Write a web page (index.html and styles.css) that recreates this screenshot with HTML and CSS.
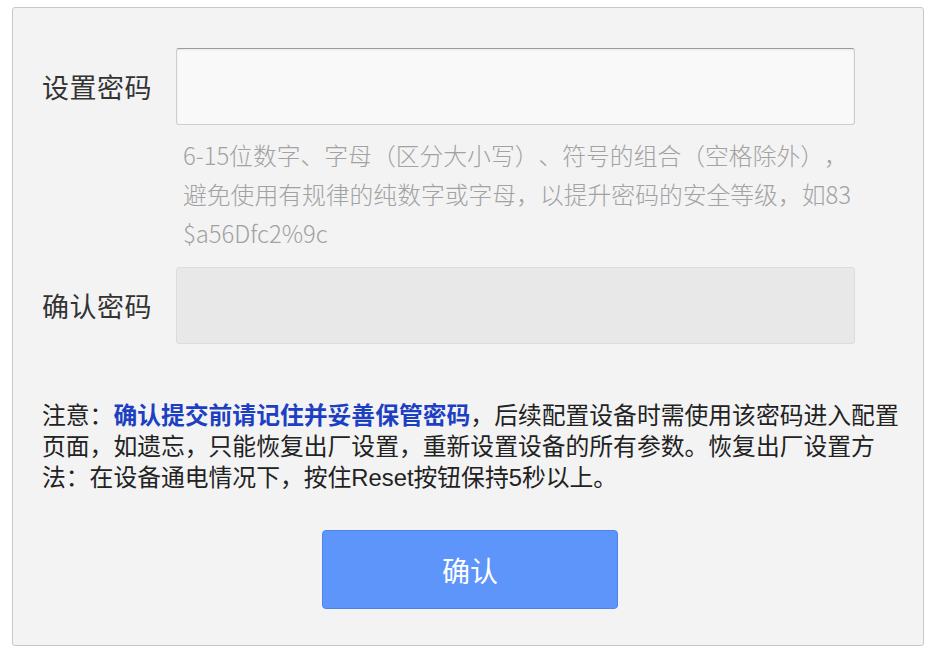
FILE: index.html
```html
<!DOCTYPE html>
<html lang="zh-CN">
<head>
<meta charset="utf-8">
<title>设置密码</title>
<link rel="stylesheet" href="styles.css">
</head>
<body>
<div class="panel">
  <div class="row">
    <label class="label" for="pwd">设置密码</label>
    <input class="field" id="pwd" type="password">
  </div>
  <p class="hint">6-15位数字、字母（区分大小写）、符号的组合（空格除外），<br>避免使用有规律的纯数字或字母，以提升密码的安全等级，如83<br>$a56Dfc2%9c</p>
  <div class="row">
    <label class="label" for="pwd2">确认密码</label>
    <input class="field field-disabled" id="pwd2" type="password" disabled>
  </div>
  <p class="notice">注意：<span class="em">确认提交前请记住并妥善保管密码</span>，后续配置设备时需使用该密码进入配置<br>页面，如遗忘，只能恢复出厂设置，重新设置设备的所有参数。恢复出厂设置方<br>法：在设备通电情况下，按住Reset按钮保持5秒以上。</p>
  <div class="actions">
    <button class="btn" type="button">确认</button>
  </div>
</div>
</body>
</html>
```
FILE: styles.css
```css
html, body {
  margin: 0;
  padding: 0;
  background: #ffffff;
}
body {
  font-family: "Noto Sans CJK SC", "Noto Sans", sans-serif;
  color: #333;
  text-spacing-trim: space-all;
}
.panel {
  box-sizing: border-box;
  margin: 7px 0 0 12px;
  width: 912px;
  height: 639px;
  background: #f3f3f4;
  border: 1px solid #c8c8c8;
  border-radius: 3px;
  padding: 40px 0 0 29px;
}
.row {
  display: flex;
  align-items: center;
}
.label {
  width: 134px;
  font-size: 27px;
  line-height: 36px;
  color: #333;
  letter-spacing: 0.5px;
}
.field {
  box-sizing: border-box;
  width: 679px;
  height: 77px;
  margin: 0;
  background: #f9f9f9;
  border: 1px solid #cdcdcd;
  border-top-color: #9a9a9a;
  border-radius: 3px;
  box-shadow: inset 0 1px 2px rgba(0, 0, 0, 0.08);
  outline: none;
}
.field-disabled {
  background: #e8e8e9;
  border: 1px solid #dcdcdc;
  box-shadow: none;
}
.hint {
  margin: 10px 0 15px 141px;
  font-size: 23.8px;
  line-height: 39px;
  color: #a2a2a2;
  white-space: nowrap;
  font-weight: 300;
  text-spacing-trim: space-all;
}
.notice {
  margin: 56px 0 0 0;
  font-family: "Liberation Sans", "Noto Sans CJK SC", sans-serif;
  font-size: 23.8px;
  line-height: 31px;
  color: #222;
  white-space: nowrap;
  text-spacing-trim: space-all;
}
.em {
  color: #1d3fc2;
  font-weight: 700;
}
.actions {
  display: flex;
  justify-content: center;
  margin: 37px 25px 0 0;
}
.btn {
  box-sizing: border-box;
  width: 296px;
  height: 79px;
  background: #5d95fb;
  border: 1px solid #4b83ea;
  border-radius: 4px;
  color: #ffffff;
  font-family: "Noto Sans CJK SC", sans-serif;
  font-size: 28px;
  padding: 0;
}
```
